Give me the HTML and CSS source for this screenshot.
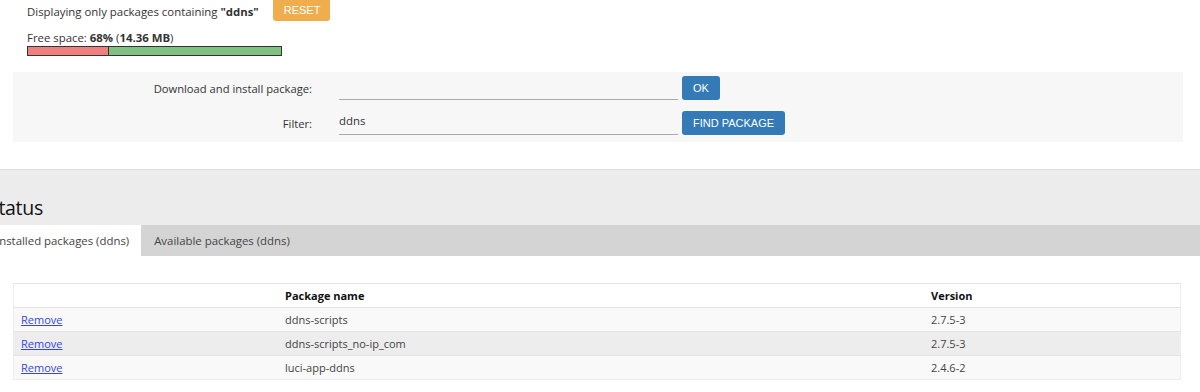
FILE: index.html
```html
<!DOCTYPE html>
<html lang="en">
<head>
  <meta charset="UTF-8" />
  <title>Software - LuCI</title>
  <link rel="stylesheet" href="styles.css">
</head>
<body>
  <div class="top">
    <div class="notice">
      <span>Displaying only packages containing <b>"ddns"</b></span>
      <button class="btn btn-reset">RESET</button>
    </div>
    <div class="free">Free space: <b>68%</b> (<b>14.36 MB</b>)</div>
    <div class="bar"><div class="bar-used"></div><div class="bar-free"></div></div>
  </div>

  <div class="actions">
    <label class="action-label">Download and install package:</label>
    <div class="field"></div>
    <button class="btn btn-blue">OK</button>

    <label class="action-label">Filter:</label>
    <div class="field">ddns</div>
    <button class="btn btn-blue">FIND PACKAGE</button>
  </div>

  <div class="status">
    <h2>Status</h2>
    <div class="tabs">
      <div class="tab active">Installed packages (ddns)</div>
      <div class="tab">Available packages (ddns)</div>
    </div>
  </div>

  <div class="list">
    <table>
      <tr>
        <th class="col-action"></th>
        <th class="col-name">Package name</th>
        <th>Version</th>
      </tr>
      <tr>
        <td><a href="#">Remove</a></td>
        <td>ddns-scripts</td>
        <td>2.7.5-3</td>
      </tr>
      <tr>
        <td><a href="#">Remove</a></td>
        <td>ddns-scripts_no-ip_com</td>
        <td>2.7.5-3</td>
      </tr>
      <tr>
        <td><a href="#">Remove</a></td>
        <td>luci-app-ddns</td>
        <td>2.4.6-2</td>
      </tr>
    </table>
  </div>
</body>
</html>
```

FILE: styles.css
```css
body {
  margin: 0;
  background: white;
  color: #333;
  font-family: 'Open Sans', 'Noto Sans', sans-serif;
  font-size: 11.4px;
}
.top {
  padding: 0 27px;
  height: 72px;
}
.notice {
  display: flex;
  align-items: center;
  gap: 14px;
  height: 23px;
}
.free {
  margin-top: 7px;
  line-height: 16px;
}
.bar {
  display: flex;
  width: 253px;
  height: 8px;
  border: 1px solid #333;
}
.bar-used {
  width: 80px;
  background: #f08080;
  border-right: 1px solid #333;
}
.bar-free {
  flex: 1;
  background: #80c080;
}
.btn {
  border: none;
  border-radius: 3px;
  color: white;
  font-family: 'Liberation Sans', Arial, sans-serif;
  font-size: 11px;
  height: 24px;
  padding: 0 11px;
}
.btn-reset {
  background: #f0ad4e;
  height: 23px;
  width: 57px;
  margin-top: -4px;
}
.btn-blue {
  background: #337ab7;
  justify-self: start;
}
.actions {
  margin: 0 17px 0 13px;
  background: #f7f7f7;
  display: grid;
  grid-template-columns: 326px 343px 1fr;
  row-gap: 11px;
  align-items: center;
  padding: 4px 0 7px;
}
.action-label {
  text-align: right;
  padding-right: 27px;
  font-size: 11.2px;
}
.field {
  margin-right: 4px;
  border-bottom: 1px solid #aaa;
  height: 24px;
  line-height: 20px;
  box-sizing: border-box;
}
.status {
  margin-top: 27px;
  background: #ececec;
  border-top: 1px solid #ddd;
}
.status h2 {
  margin: 0 0 0 -12px;
  font-weight: normal;
  font-size: 19.5px;
  letter-spacing: -0.3px;
  color: #111;
  height: 55px;
  line-height: 76px;
}
.tabs {
  display: flex;
  background: #d4d4d4;
  height: 31px;
  margin-left: -17px;
}
.tab {
  padding: 0 12px 0 13px;
  line-height: 31px;
  color: #444;
}
.tab.active {
  background: white;
}
.list {
  padding: 27px 19px 0 13px;
  font-size: 11px;
}
table {
  width: 100%;
  border-collapse: collapse;
  border: 1px solid #eee;
}
th, td {
  text-align: left;
  padding: 0 7px;
  height: 23px;
  border-top: 1px solid #e4e4e4;
}
th {
  color: #111;
  background: white;
}
td {
  color: #444;
}
tr:nth-child(even) td {
  background: #f9f9f9;
}
tr:nth-child(odd) td {
  background: #ededed;
}
.col-action {
  width: 250px;
}
.col-name {
  width: 632px;
}
a {
  color: #3344ee;
}
```
